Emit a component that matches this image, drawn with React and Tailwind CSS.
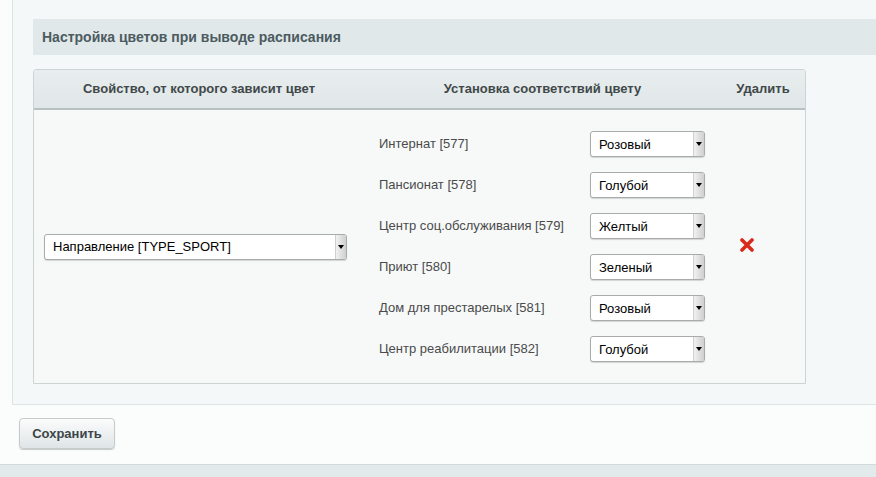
import React from "react";

function Select({ value, className = "" }) {
  return (
    <div
      className={
        "relative flex h-[26px] items-center rounded-[3px] border border-[#a9abab] bg-white pl-[8px] text-[13px] text-black shadow-[0_1px_1px_rgba(0,0,0,0.15)] " +
        className
      }
    >
      <span className="leading-none">{value}</span>
      <div className="absolute right-0 top-0 flex h-full w-[11px] items-center justify-center rounded-r-[2px] border-l border-[#d0d0d0] bg-gradient-to-r from-[#f1f1f1] to-[#cfcfcf]">
        <div className="h-0 w-0 border-l-[3px] border-r-[3px] border-t-[4px] border-l-transparent border-r-transparent border-t-black" />
      </div>
    </div>
  );
}

const rows = [
  ["Интернат [577]", "Розовый"],
  ["Пансионат [578]", "Голубой"],
  ["Центр соц.обслуживания [579]", "Желтый"],
  ["Приют [580]", "Зеленый"],
  ["Дом для престарелых [581]", "Розовый"],
  ["Центр реабилитации [582]", "Голубой"],
];

export default function App() {
  return (
    <div
      className="h-[477px] w-[876px] overflow-hidden bg-[#fbfdfd]"
      style={{ fontFamily: '"Liberation Sans", Arial, sans-serif' }}
    >
      <div className="ml-[12px] border-b border-l border-[#dde4e6] bg-[#f4f8f9] pb-[20px] pl-[20px] pt-[19px]">
        <div className="flex h-[36px] items-center bg-[#e1e8ea] pl-[9px] text-[14px] font-bold text-[#4c5b60]">
          Настройка цветов при выводе расписания
        </div>
        <div className="mt-[14px] w-[773px] rounded-t-[3px] border border-[#cdd4d6] bg-[#f7f9f9]">
          <div className="flex h-[40px] items-center border-b-2 border-[#b9c0c2] bg-gradient-to-b from-[#e8edee] to-[#e1e6e8] text-[13px] font-bold text-[#404849]">
            <div className="w-[330px] text-center">Свойство, от которого зависит цвет</div>
            <div className="w-[357px] text-center">Установка соответствий цвету</div>
            <div className="flex-1 text-center">Удалить</div>
          </div>
          <div className="flex h-[273px] items-center">
            <div className="w-[330px] pl-[10px]">
              <Select value="Направление [TYPE_SPORT]" className="w-[303px]" />
            </div>
            <div className="flex w-[357px] flex-col gap-[15px] pl-[15px]">
              {rows.map(([label, val]) => (
                <div key={label} className="flex items-center">
                  <div className="w-[211px] text-[13px] text-[#4a4a4a]">{label}</div>
                  <Select value={val} className="w-[115px]" />
                </div>
              ))}
            </div>
            <div className="flex flex-1 justify-center pb-[4px] pr-[32px]">
              <svg width="14" height="14" viewBox="0 0 14 14">
                <path
                  d="M2 2 L12 12 M12 2 L2 12"
                  stroke="#d92a1c"
                  strokeWidth="3.6"
                  strokeLinecap="round"
                />
              </svg>
            </div>
          </div>
        </div>
      </div>
      <div className="pl-[19px] pt-[13px]">
        <button className="flex h-[31px] w-[96px] items-center justify-center rounded-[4px] border border-[#c4cbcd] bg-gradient-to-b from-[#fbfcfc] to-[#dfe5e7] text-[13px] font-bold text-[#3c4648] shadow-[0_1px_1px_rgba(0,0,0,0.2)]">
          Сохранить
        </button>
      </div>
      <div className="mt-[15px] h-[20px] border-t border-[#d3dadc] bg-[#e3eaec]" />
    </div>
  );
}
